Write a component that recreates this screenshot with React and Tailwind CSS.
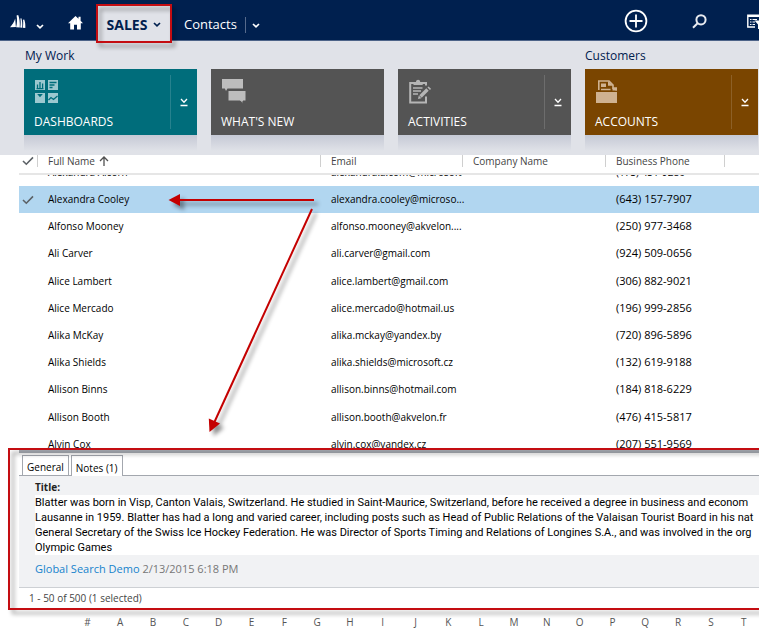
import React from "react";

const contacts = [
  ["Alexandra Cooley", "alexandra.cooley@microso...", "(643) 157-7907"],
  ["Alfonso Mooney", "alfonso.mooney@akvelon....", "(250) 977-3468"],
  ["Ali Carver", "ali.carver@gmail.com", "(924) 509-0656"],
  ["Alice Lambert", "alice.lambert@gmail.com", "(306) 882-9021"],
  ["Alice Mercado", "alice.mercado@hotmail.us", "(196) 999-2856"],
  ["Alika McKay", "alika.mckay@yandex.by", "(720) 896-5896"],
  ["Alika Shields", "alika.shields@microsoft.cz", "(132) 619-9188"],
  ["Allison Binns", "allison.binns@hotmail.com", "(184) 818-6229"],
  ["Allison Booth", "allison.booth@akvelon.fr", "(476) 415-5817"],
  ["Alvin Cox", "alvin.cox@yandex.cz", "(207) 551-9569"],
];

const letters = "#ABCDEFGHIJKLMNOPQRSTUVWXYZ".split("");

function Chevron({ className }) {
  return (
    <svg className={className} width="8" height="5" viewBox="0 0 8 5" fill="none" stroke="currentColor" strokeWidth="1.7" aria-hidden="true">
      <path d="M1 1 L4 3.8 L7 1" />
    </svg>
  );
}

function Check() {
  return (
    <svg width="12" height="10" viewBox="0 0 12 10" fill="none" stroke="#5c6166" strokeWidth="1.6" aria-hidden="true">
      <path d="M1 5 L4.3 8.2 L11 1.4" />
    </svg>
  );
}

function LogoIcon() {
  return (
    <svg width="16" height="14" viewBox="0 0 16 14" fill="#fff" aria-hidden="true">
      <path d="M0 12.2 C2.4 10 4.2 7 5.2 3.6 L5.9 12 Z" />
      <path d="M6.1 12.2 C7.2 8 7.2 4 6.6 0.4 L8.2 0 C9.4 3 10 7 9.8 12.4 Z" />
      <path d="M10.2 12.5 C10.8 9 10.8 6 10.4 3.4 L11.4 3.2 C12.3 6 12.5 9 12.2 12.7 Z" />
      <path d="M12.8 12.8 C13.3 10 13.3 7 13 4.8 L14.2 4.6 C15.2 7 15.5 10 15.3 13 Z" />
    </svg>
  );
}

function HomeIcon() {
  return (
    <svg width="15" height="14" viewBox="0 0 15 14" fill="#fff" aria-hidden="true">
      <path d="M7.5 0 L10.5 2.8 V0.8 H12.6 V4.8 L15 7.2 H12.8 V13.5 H9 V8.8 H6 V13.5 H2.2 V7.2 H0 Z" />
    </svg>
  );
}

function DashboardsIcon() {
  return (
    <svg width="23" height="23" viewBox="0 0 23 23" aria-hidden="true">
      <g fill="#9cc8cf">
        <rect x="0" y="0" width="10" height="10" />
        <rect x="13" y="0" width="10" height="10" />
        <rect x="0" y="13" width="10" height="10" />
        <rect x="13" y="13" width="10" height="10" />
      </g>
      <g stroke="#006d7b" fill="none" strokeWidth="1.3">
        <path d="M2.5 8.5V4.5M5 8.5V2M7.6 8.5V3.5M1.5 8.6H8.5" />
        <path d="M14.5 2.5H21.5M14.5 5H19.5M14.5 7.5H17.5" />
        <path d="M3.6 14.6H6.4L5 16.2Z" />
        <path d="M13.5 20L16 17.5L18.5 19.5L22.5 16" />
      </g>
    </svg>
  );
}

function ChatIcon() {
  return (
    <svg width="25" height="25" viewBox="0 0 25 25" fill="#bdbdbd" aria-hidden="true">
      <path d="M0 0H21V9.5H5.5L4 12L2.8 9.5H0Z" />
      <path d="M6 11.5H24V22H21V24.5L18 22H6Z" stroke="#545454" strokeWidth="1" />
    </svg>
  );
}

function ClipboardIcon() {
  return (
    <svg width="22" height="25" viewBox="0 0 22 25" fill="none" stroke="#b5b5b5" aria-hidden="true">
      <path d="M17 6.5V4H1.2V23.5H17V17.5" strokeWidth="2" />
      <path d="M4.5 6V3H7C7 0 11.2 0 11.2 3H13.7V6Z" fill="#b5b5b5" stroke="none" />
      <path d="M4 9H13.5M4 12H12M4 15H9" strokeWidth="1.4" />
      <path d="M11.5 17.5L18.5 10.5" strokeWidth="3.4" />
      <path d="M19 8L21.5 10.5" strokeWidth="1.6" />
      <path d="M9 20L9.8 16.6L12.4 19.2Z" fill="#b5b5b5" stroke="none" />
    </svg>
  );
}

function AccountsIcon() {
  return (
    <svg width="22" height="24" viewBox="0 0 22 24" aria-hidden="true">
      <path d="M0 12H21V23H0Z" fill="#cfb291" />
      <path d="M2.8 10V1H13L17 5V8.2H20.2V10.5" fill="none" stroke="#cfb291" strokeWidth="1.6" />
      <path d="M12 1V5.8H17.5Z" fill="#cfb291" />
      <path d="M16.500 7.500H21V10.500H16.500Z" fill="#cfb291" />
      <path d="M5 3.5H10V7H5Z" fill="#cfb291" />
      <path d="M5 9.5H14.500" stroke="#cfb291" strokeWidth="1.5" />
    </svg>
  );
}

function Tile({ label, color, icon, menu }) {
  return (
    <div className="w-[173px] shrink-0">
      <div className={`flex h-[66px] text-white ${color}`}>
        <button type="button" className="flex flex-1 flex-col justify-between pt-[10px] pb-[3px] pl-[10px] text-left">
          <span className="flex h-[25px] items-center pl-px">{icon}</span>
          <span className="text-[12px] leading-5">{label}</span>
        </button>
        {menu && (
          <button type="button" aria-label={`${label} menu`} className="my-[6px] flex w-[27px] items-center justify-center border-l border-white/15">
            <svg width="8" height="9" viewBox="0 0 8 9" fill="none" stroke="#fff" strokeWidth="1.3" aria-hidden="true">
              <path d="M1 1 L4 4.2 L7 1 M0.5 7.5 H7.5" />
            </svg>
          </button>
        )}
      </div>
      <div className="h-4 bg-linear-to-b from-[#c5c9d5] to-[#e0e2e8]" />
    </div>
  );
}

function Header() {
  return (
    <header className="flex h-[41px] items-center border-b border-[#4d6388] bg-[#00204f] pl-[10px] text-white">
      <button type="button" aria-label="Microsoft Dynamics" className="flex items-center gap-[10px] pt-1">
        <LogoIcon />
        <Chevron className="mt-2" />
      </button>
      <button type="button" aria-label="Home" className="ml-6 pt-[6px]">
        <HomeIcon />
      </button>
      <div className="relative ml-[14px] h-[41px] w-[74px] pt-1">
        <button type="button" className="flex h-10 w-full items-center justify-center gap-[6px] bg-[#e0e2e8] pt-[2px] text-[14px] font-bold text-[#00204f]">
          SALES
          <Chevron />
        </button>
        <div className="pointer-events-none absolute -inset-x-px top-1 h-[39px] border-2 border-[#c40d12] drop-shadow-[3px_4px_2px_rgba(0,0,0,0.4)]" />
      </div>
      <button type="button" className="ml-[13px] pt-[10px] text-[13px]">Contacts</button>
      <button type="button" aria-label="Contacts menu" className="mt-[10px] ml-2 flex h-4 items-center border-l border-[#566a8c] pl-[6px]">
        <Chevron />
      </button>
      <nav aria-label="Tools" className="-mr-2 ml-auto flex items-center gap-10 pt-[2px]">
        <button type="button" aria-label="Create">
          <svg width="24" height="24" viewBox="0 0 24 24" fill="none" stroke="#fff" strokeWidth="1.8" aria-hidden="true">
            <circle cx="12" cy="12" r="10.4" />
            <path d="M12 5.5V18.5M5.5 12H18.5" />
          </svg>
        </button>
        <button type="button" aria-label="Search" className="ml-1">
          <svg width="15" height="15" viewBox="0 0 15 15" fill="none" stroke="#e8ebf0" strokeWidth="2" aria-hidden="true">
            <circle cx="9" cy="5.8" r="4.6" />
            <path d="M5.6 9.2L1 13.8" />
          </svg>
        </button>
        <button type="button" aria-label="Advanced Find">
          <svg width="20" height="15" viewBox="0 0 20 15" fill="none" stroke="#fff" strokeWidth="1.4" aria-hidden="true">
            <path d="M17 5V1.2H0.8V13H8" />
            <path d="M1 2H17" strokeWidth="2" />
            <path d="M3 5.5H4.500M5.500 5.500H10M3 8H4.500M5.500 8H8M3 10.500H4.500M5.500 10.500H8" strokeWidth="1.1" />
            <path d="M7.500 6.500H18L14 10.500V15H11V10.500Z" fill="#fff" stroke="none" />
          </svg>
        </button>
      </nav>
    </header>
  );
}

function Annotations() {
  return (
    <svg className="pointer-events-none absolute top-[190px] left-[160px] drop-shadow-[4px_4px_2px_rgba(0,0,0,0.45)]" width="170" height="255" viewBox="160 190 170 255" aria-hidden="true">
      <g fill="#c40000" stroke="#c40000">
        <path d="M178 200H314" strokeWidth="2" />
        <path d="M168.500 200L180 194V206Z" stroke="none" />
        <path d="M312 209L214 423" strokeWidth="2" />
        <path d="M209.500 432L208.800 418.500L220 423.500Z" stroke="none" />
      </g>
    </svg>
  );
}

function HeadCell({ children }) {
  return (
    <th className="align-top">
      <div className="flex h-3 items-center gap-1 border-l border-[#cfcfcf] pl-[10px]">{children}</div>
    </th>
  );
}

function ClippedCell({ children }) {
  return (
    <td>
      <div className="flex h-[11px] items-end overflow-hidden pl-[11px] leading-[27px]">{children}</div>
    </td>
  );
}

export default function App() {
  return (
    <div className="relative overflow-hidden bg-white font-['Open_Sans','Noto_Sans',sans-serif] text-[10px] text-black">
      <Header />

      <section className="flex gap-[14px] bg-[#e0e2e8] pt-1 pb-1 pl-6 text-[#00204f]">
        <div>
          <h2 className="h-6 pl-px text-[12px] leading-[22px]">My Work</h2>
          <div className="flex gap-[14px]">
            <Tile label="DASHBOARDS" color="bg-[#006d7b]" icon={<DashboardsIcon />} menu />
            <Tile label="WHAT'S NEW" color="bg-[#545454]" icon={<ChatIcon />} />
            <Tile label="ACTIVITIES" color="bg-[#545454]" icon={<ClipboardIcon />} menu />
          </div>
        </div>
        <div>
          <h2 className="h-6 text-[12px] leading-[22px]">Customers</h2>
          <Tile label="ACCOUNTS" color="bg-[#7a4500]" icon={<AccountsIcon />} menu />
        </div>
      </section>

      <main>
        <div className="h-[293px] overflow-hidden pl-[19px]">
          <table className="w-full table-fixed border-collapse text-left">
            <colgroup>
              <col className="w-[18px]" />
              <col className="w-[283px]" />
              <col className="w-[142px]" />
              <col className="w-[143px]" />
              <col className="w-[119px]" />
              <col />
            </colgroup>
            <thead>
              <tr className="h-[19px] border-b-2 border-[#e6e6e6] text-[#444] [&>th]:font-normal">
                <th aria-label="Selected" className="pt-px pl-[3px] align-top"><Check /></th>
                <HeadCell>
                  Full Name
                  <svg width="10" height="10" viewBox="0 0 10 10" fill="none" stroke="#505050" strokeWidth="1.3" aria-hidden="true">
                    <path d="M5 10V1M1 5L5 1L9 5" />
                  </svg>
                </HeadCell>
                <HeadCell>Email</HeadCell>
                <HeadCell>Company Name</HeadCell>
                <HeadCell>Business Phone</HeadCell>
                <HeadCell />
              </tr>
            </thead>
            <tbody>
              <tr>
                <td />
                <ClippedCell>Alexandra Alcorn</ClippedCell>
                <ClippedCell>alexandra.a.com@microsoft...</ClippedCell>
                <td />
                <ClippedCell>(173) 451-9280</ClippedCell>
                <td />
              </tr>
              {contacts.map(([name, email, phone], i) => (
                <tr key={name} className={i === 0 ? "h-[27px] bg-[#b1d6f0]" : "h-[27px] nth-[5n]:h-[28px]"}>
                  <td className="pl-[3px]">{i === 0 && <Check />}</td>
                  <td className="pl-[11px]">{name}</td>
                  <td className="pl-[11px] whitespace-nowrap">{email}</td>
                  <td />
                  <td className="pl-[11px] text-[11px]">{phone}</td>
                  <td />
                </tr>
              ))}
            </tbody>
          </table>
        </div>

        <section className="relative">
          <div className="pt-[2px] pl-[19px]">
            <div className="h-[3px] bg-[#a9adb5]" />
            <div role="tablist" className="flex h-[23px] items-end gap-[2px] border-b border-[#a3a7ae] pl-[3px]">
              <button type="button" role="tab" aria-selected="false" className="h-5 border border-b-0 border-[#a3a7ae] px-1 pt-1">General</button>
              <button type="button" role="tab" aria-selected="true" className="-mb-px h-[21px] border border-b-0 border-[#a3a7ae] bg-white px-1 pt-1">Notes (1)</button>
            </div>
            <article className="border-b border-[#cdd0d4] bg-[#f1f2f4] pt-1 pb-2 pl-4">
              <h3 className="h-[15px] leading-[15px] font-bold text-[#222]">Title:</h3>
              <p className="h-[60px] overflow-hidden bg-white font-[Roboto,'Open_Sans',sans-serif] text-[11px] leading-[15px] whitespace-nowrap">
                Blatter was born in Visp, Canton Valais, Switzerland. He studied in Saint-Maurice, Switzerland, before he received a degree in business and econom
                <br />
                Lausanne in 1959. Blatter has had a long and varied career, including posts such as Head of Public Relations of the Valaisan Tourist Board in his nat
                <br />
                General Secretary of the Swiss Ice Hockey Federation. He was Director of Sports Timing and Relations of Longines S.A., and was involved in the org
                <br />
                Olympic Games
              </p>
              <p className="pt-1 text-[11px] leading-5 text-[#777]">
                <a href="#author" className="text-[#1583cc]">Global Search Demo</a> 2/13/2015 6:18 PM
              </p>
            </article>
            <p className="pb-[2px] pl-[10px] leading-5 text-[#444]">1 - 50 of 500 (1 selected)</p>
          </div>
          <div className="pointer-events-none absolute inset-y-0 -right-2 left-2 border-2 border-[#c40d12] drop-shadow-[4px_4px_2px_rgba(0,0,0,0.4)]" />
        </section>

        <nav aria-label="Filter by letter" className="overflow-hidden pt-1 pl-[71px]">
          <div className="grid w-[886px] grid-cols-27 text-center leading-4 text-[#555]">
            {letters.map((l) => (
              <a key={l} href={`#filter-${l}`}>{l}</a>
            ))}
          </div>
        </nav>
      </main>
      <Annotations />
    </div>
  );
}
